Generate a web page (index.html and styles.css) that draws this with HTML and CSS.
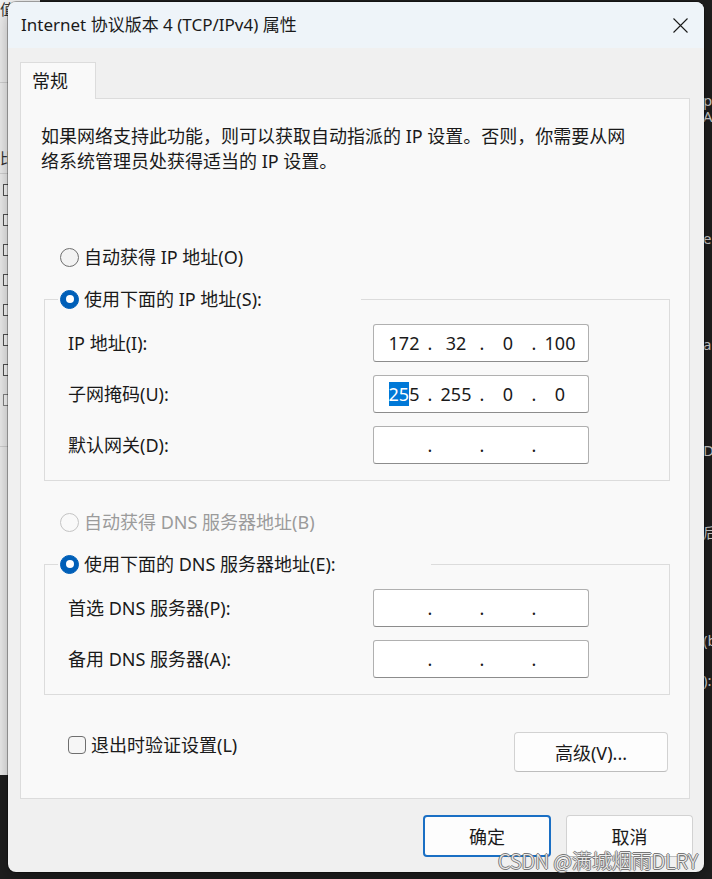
FILE: index.html
```html
<!DOCTYPE html>
<html lang="zh-CN">
<head>
<meta charset="utf-8">
<title>Internet 协议版本 4 (TCP/IPv4) 属性</title>
<link rel="stylesheet" href="styles.css">
</head>
<body>
<div class="bg-left">
  <span class="bgl-char">值</span>
  <span class="bgl-line"></span>
  <span class="bgl-char bgl-c2">比</span>
  <span class="bgl-line"></span>
  <div class="bgl-checks">
    <span class="bgl-box"></span><span class="bgl-box"></span><span class="bgl-box"></span><span class="bgl-box"></span>
    <span class="bgl-box"></span><span class="bgl-box"></span><span class="bgl-box"></span><span class="bgl-box off"></span>
  </div>
  <span class="bgl-line bgl-l3"></span>
</div>
<div class="bg-right">
  <span class="bgr-t t1">p<br>A</span>
  <span class="bgr-t t2">e</span>
  <span class="bgr-t t3">a</span>
  <span class="bgr-t t4">D</span>
  <span class="bgr-t t5">后</span>
  <span class="bgr-t t6">(b</span>
  <span class="bgr-t t7">):</span>
</div>

<div class="dialog">
  <div class="titlebar">
    <span class="title">Internet 协议版本 4 (TCP/IPv4) 属性</span>
    <svg class="close" width="15" height="15" viewBox="0 0 15 15"><path d="M0.5 0.5 L14.5 14.5 M14.5 0.5 L0.5 14.5" stroke="#1a1a1a" stroke-width="1.1" fill="none"/></svg>
  </div>
  <div class="body">
    <div class="tab">常规</div>
    <div class="panel">
      <p class="desc">如果网络支持此功能，则可以获取自动指派的 IP 设置。否则，你需要从网<br>络系统管理员处获得适当的 IP 设置。</p>

      <div class="radio-row first">
        <span class="radio"></span><span>自动获得 IP 地址(O)</span>
      </div>

      <fieldset class="group">
        <legend class="legend legend-ip"><span class="radio on"></span><span>使用下面的 IP 地址(S):</span></legend>
        <div class="fields">
          <div class="field-row">
            <span class="field-label">IP 地址(I):</span>
            <div class="ip"><span>172</span><span>.</span><span>32</span><span>.</span><span>0</span><span>.</span><span>100</span></div>
          </div>
          <div class="field-row">
            <span class="field-label">子网掩码(U):</span>
            <div class="ip"><span><span class="sel">25</span>5</span><span>.</span><span>255</span><span>.</span><span>0</span><span>.</span><span>0</span></div>
          </div>
          <div class="field-row">
            <span class="field-label">默认网关(D):</span>
            <div class="ip"><span></span><span>.</span><span></span><span>.</span><span></span><span>.</span><span></span></div>
          </div>
        </div>
      </fieldset>

      <div class="radio-row disabled">
        <span class="radio"></span><span>自动获得 DNS 服务器地址(B)</span>
      </div>

      <fieldset class="group">
        <legend class="legend legend-dns"><span class="radio on"></span><span>使用下面的 DNS 服务器地址(E):</span></legend>
        <div class="fields">
          <div class="field-row">
            <span class="field-label">首选 DNS 服务器(P):</span>
            <div class="ip"><span></span><span>.</span><span></span><span>.</span><span></span><span>.</span><span></span></div>
          </div>
          <div class="field-row">
            <span class="field-label">备用 DNS 服务器(A):</span>
            <div class="ip"><span></span><span>.</span><span></span><span>.</span><span></span><span>.</span><span></span></div>
          </div>
        </div>
      </fieldset>

      <div class="bottom-row">
        <div class="check-wrap"><span class="checkbox"></span><span>退出时验证设置(L)</span></div>
        <div class="btn adv">高级(V)...</div>
      </div>
    </div>
    <div class="footer">
      <div class="btn ok">确定</div>
      <div class="btn cancel">取消</div>
    </div>
  </div>
</div>

<div class="watermark">CSDN @满城烟雨DLRY</div>
</body>
</html>
```

FILE: styles.css
```css
* { box-sizing: border-box; }

body {
  margin: 0;
  width: 712px;
  height: 879px;
  position: relative;
  overflow: hidden;
  background: #1f1f1f;
  font-family: "Noto Sans", "Noto Sans CJK SC", sans-serif;
  color: #1a1a1a;
}

/* backdrop windows */
.bg-left {
  position: absolute;
  left: 0;
  top: 0;
  width: 40px;
  height: 775px;
  background: #f3f3f3;
  display: flex;
  flex-direction: column;
  font-family: "Noto Sans CJK SC", sans-serif;
}
.bgl-char { font-size: 15px; line-height: 18px; color: #333; padding-left: 0; }
.bgl-c2 { margin-top: 66px; }
.bgl-line { height: 1px; background: #d6d6d6; margin-top: 64px; }
.bgl-line:nth-child(4) { margin-top: 6px; }
.bgl-checks { display: flex; flex-direction: column; gap: 18px; padding: 10px 0 0 3px; }
.bgl-box { width: 12px; height: 12px; border: 1px solid #555; background: #fff; }
.bgl-box.off { border-color: #888; }
.bgl-l3 { margin-top: 40px; }

.bg-right {
  position: absolute;
  left: 696px;
  top: 0;
  width: 16px;
  height: 879px;
  display: flex;
  flex-direction: column;
  font-size: 15px;
  color: #cfcfcf;
  font-family: "Noto Sans", "Noto Sans CJK SC", sans-serif;
}
.bgr-t { line-height: 16px; padding-left: 7px; }
.t1 { margin-top: 92px; }
.t2 { margin-top: 106px; }
.t3 { margin-top: 90px; }
.t4 { margin-top: 90px; }
.t5 { margin-top: 66px; }
.t6 { margin-top: 92px; }
.t7 { margin-top: 24px; }

/* dialog window */
.dialog {
  position: absolute;
  left: 8px;
  top: 2px;
  width: 696px;
  height: 870px;
  background: #f0f0f0;
  border-radius: 8px;
  overflow: hidden;
  box-shadow: 0 0 0 1px rgba(0, 0, 0, 0.3), 0 6px 20px rgba(0, 0, 0, 0.35);
  display: flex;
  flex-direction: column;
  z-index: 2;
}

.titlebar {
  height: 46px;
  flex: none;
  background: #eef4f9;
  display: flex;
  align-items: center;
  justify-content: space-between;
  padding: 0 16px 0 13px;
  font-size: 17px;
  color: #1a1a1a;
}
.title { line-height: 22px; }
.close { display: block; }

.body {
  flex: 1;
  padding: 14px 11px 0 12px;
  display: flex;
  flex-direction: column;
}

.tab {
  width: 76px;
  height: 37px;
  border: 1px solid #dcdcdc;
  border-bottom: none;
  background: #f9f9f9;
  font-size: 18px;
  line-height: 36px;
  padding-left: 11px;
  margin-bottom: -1px;
  position: relative;
  z-index: 1;
}

.panel {
  width: 670px;
  height: 701px;
  border: 1px solid #dcdcdc;
  background: #f9f9f9;
  display: flex;
  flex-direction: column;
  font-size: 18px;
}

.desc {
  margin: 25px 0 0 20px;
  font-size: 18px;
  line-height: 25px;
  white-space: nowrap;
}

.radio-row {
  height: 30px;
  display: flex;
  align-items: center;
  margin-left: 39px;
  line-height: 24px;
}
.radio-row.first { margin-top: 68px; }
.radio-row.disabled { margin-top: 26px; color: #9b9b9b; }

.radio {
  width: 19px;
  height: 19px;
  flex: none;
  border-radius: 50%;
  border: 1px solid #6f6f6f;
  background: #f3f3f3;
  margin-right: 5px;
  position: relative;
}
.radio-row.disabled .radio { border-color: #c4c4c4; background: #f9f9f9; }
.radio.on { background: #005fb8; border-color: #005fb8; }
.radio.on::after {
  content: "";
  position: absolute;
  left: 50%;
  top: 50%;
  width: 8px;
  height: 8px;
  margin: -4px 0 0 -4px;
  border-radius: 50%;
  background: #fff;
}

.group {
  margin: 12px 19px 0 23px;
  padding: 0;
  border: 1px solid #dcdcdc;
  min-width: 0;
}
.legend {
  margin-left: 13px;
  padding: 0 0 0 2px;
  height: 30px;
  display: flex;
  align-items: center;
  line-height: 24px;
}
.legend-ip { width: 303px; }
.legend-dns { width: 373px; }

.fields {
  padding: 10px 0 16px 23px;
  display: flex;
  flex-direction: column;
  gap: 13px;
}
.field-row {
  height: 38px;
  display: flex;
  align-items: center;
}
.field-label { width: 305px; line-height: 24px; }

.ip {
  width: 216px;
  height: 38px;
  border: 1px solid #b0b0b0;
  border-bottom-color: #8c8c8c;
  border-radius: 3px;
  background: #fff;
  display: grid;
  grid-template-columns: 44px 8px 44px 8px 44px 8px 44px;
  padding-left: 8px;
  align-items: center;
  justify-items: center;
  font-size: 18px;
  line-height: 24px;
  color: #1a1a1a;
}
.sel { background: #0078d7; color: #fff; }

.bottom-row {
  margin-top: 37px;
  padding: 0 21px 0 47px;
  display: flex;
  justify-content: space-between;
  align-items: flex-start;
}
.check-wrap {
  height: 25px;
  display: flex;
  align-items: center;
  line-height: 24px;
}
.checkbox {
  width: 18px;
  height: 18px;
  border: 1px solid #6f6f6f;
  border-radius: 4px;
  background: #f6f6f6;
  margin-right: 5px;
}

.btn {
  display: flex;
  align-items: center;
  justify-content: center;
  background: #fdfdfd;
  border: 1px solid #d2d2d2;
  border-bottom-color: #bdbdbd;
  border-radius: 4px;
  font-size: 18px;
  color: #1a1a1a;
}
.adv { width: 154px; height: 40px; }

.footer {
  margin-top: 16px;
  display: flex;
  justify-content: flex-end;
  gap: 15px;
}
.ok { width: 128px; height: 42px; border: 2px solid #1a6fc4; }
.cancel { width: 127px; height: 42px; }

.watermark {
  position: absolute;
  right: 14px;
  top: 848px;
  z-index: 3;
  font-family: "Noto Sans CJK SC", sans-serif;
  font-weight: 300;
  font-size: 20px;
  line-height: 26px;
  color: #ececec;
  text-shadow: 1px 0 #777, -1px 0 #777, 0 1px #777, 0 -1px #777;
}
```
